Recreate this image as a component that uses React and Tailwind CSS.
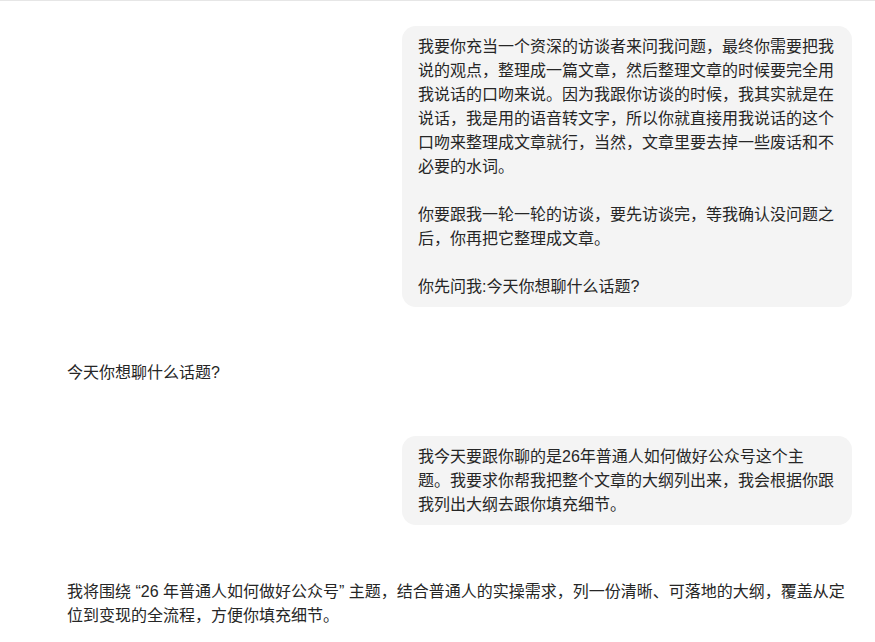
export default function App() {
  const b1 = [
    "我要你充当一个资深的访谈者来问我问题，最终你需要把我",
    "说的观点，整理成一篇文章，然后整理文章的时候要完全用",
    "我说话的口吻来说。因为我跟你访谈的时候，我其实就是在",
    "说话，我是用的语音转文字，所以你就直接用我说话的这个",
    "口吻来整理成文章就行，当然，文章里要去掉一些废话和不",
    "必要的水词。",
  ];
  const b1b = ["你要跟我一轮一轮的访谈，要先访谈完，等我确认没问题之", "后，你再把它整理成文章。"];
  const b3 = [
    "我今天要跟你聊的是26年普通人如何做好公众号这个主",
    "题。我要求你帮我把整个文章的大纲列出来，我会根据你跟",
    "我列出大纲去跟你填充细节。",
  ];
  return (
    <div className="min-h-[642px] w-full overflow-hidden border-t border-[#e6e6e6] bg-white pl-[67px] pr-[23px] pt-[25px] font-['Liberation_Sans','Noto_Sans_CJK_SC',sans-serif] text-[16px] leading-[24px] text-[#262626]">
      <div className="flex justify-end">
        <div className="w-[450px] rounded-[14px] bg-[#f4f4f4] px-4 pb-[8px] pt-[9px]">
          {b1.map((l, i) => (
            <div key={i} className="whitespace-nowrap">{l}</div>
          ))}
          <div className="h-[24px]" />
          {b1b.map((l, i) => (
            <div key={i} className="whitespace-nowrap">{l}</div>
          ))}
          <div className="h-[24px]" />
          <div className="whitespace-nowrap">你先问我:今天你想聊什么话题?</div>
        </div>
      </div>
      <div className="mt-[54px]">今天你想聊什么话题?</div>
      <div className="mt-[51px] flex justify-end">
        <div className="w-[450px] rounded-[14px] bg-[#f4f4f4] px-4 pb-[8px] pt-[9px]">
          {b3.map((l, i) => (
            <div key={i} className="whitespace-nowrap">{l}</div>
          ))}
        </div>
      </div>
      <div className="mt-[55px]">
        <div className="whitespace-nowrap">
          我将围绕 “26 年普通人如何做好公众号” 主题，结合普通人的实操需求，列一份清晰、可落地的大纲，覆盖从定
        </div>
        <div className="whitespace-nowrap">位到变现的全流程，方便你填充细节。</div>
      </div>
    </div>
  );
}
